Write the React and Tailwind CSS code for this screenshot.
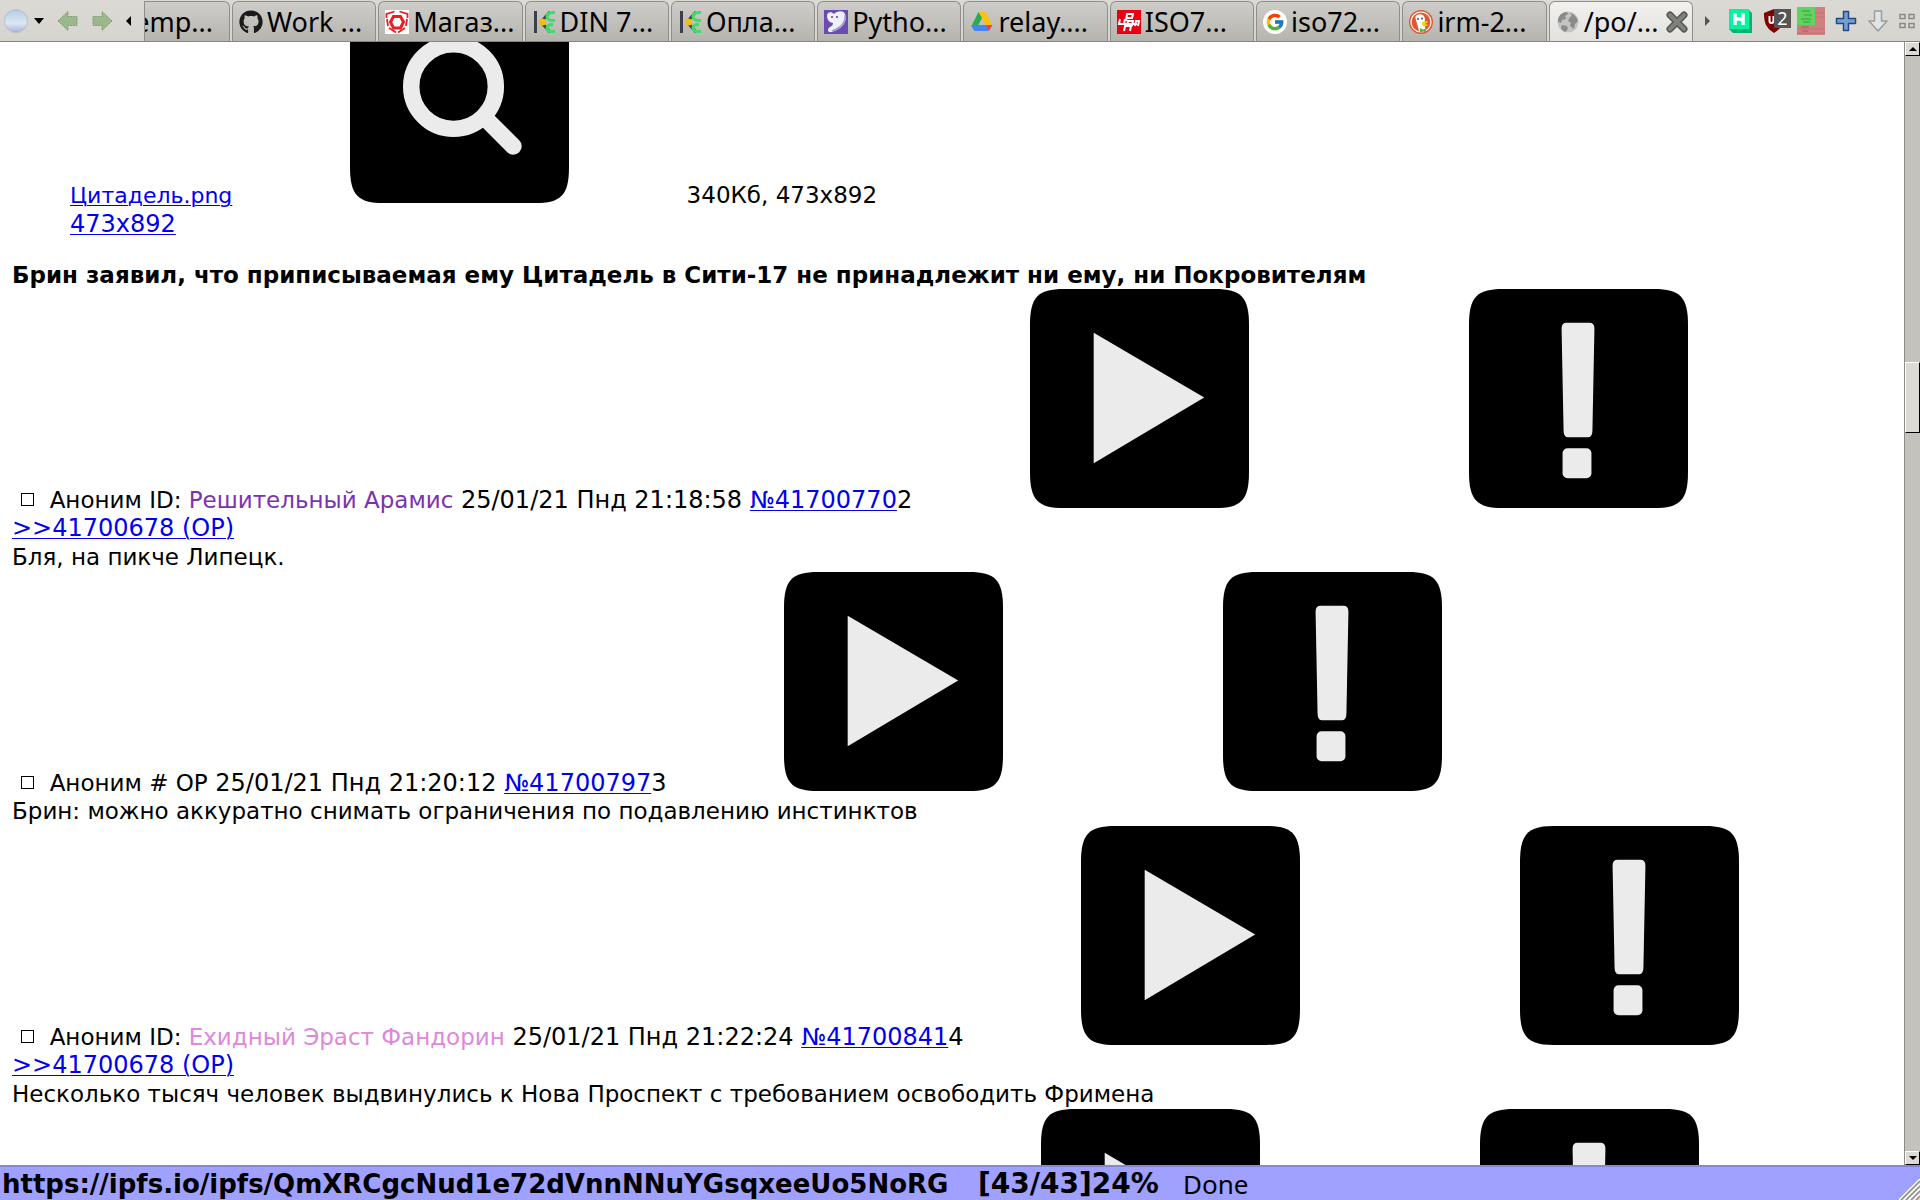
import React from 'react';
import { FaGithub } from 'react-icons/fa';
import { FcGoogle } from 'react-icons/fc';

const ShopIcon = () => (
    <svg viewBox="0 0 24 24" className="w-6 h-6 shrink-0">
        <rect width="24" height="24" fill="#fff" />
        <path d="M8.500 6.500h7l3 5.500-3 6h-7l-3-6z" fill="none" stroke="#ee1c25" strokeWidth="3" />
        <path d="M1.500 8V4l8-2.500M22.500 8V4l-8-2.500M2 9l1 7M22 9l-1 7M4 18l7 4.500M20 18l-7 4.500" fill="none" stroke="#ee1c25" strokeWidth="1.800" />
    </svg>
);

const KrepIcon = () => (
    <svg viewBox="0 0 24 24" className="w-6 h-6 shrink-0" fill="none">
        <path d="M3.500 1v22" stroke="#3c4048" strokeWidth="3" />
        <path d="M18 2L9 12l9 10" stroke="#3c4048" strokeWidth="3" />
        <path d="M23 2.500h-2c-8 0-8 8 0 8h2M23 21.500h-2c-8 0-8-7 0-7" stroke="#3fdc69" strokeWidth="3" />
        <circle cx="10.500" cy="12" r="3.500" fill="#f7bd0c" />
    </svg>
);

const PythonIcon = () => (
    <svg viewBox="0 0 24 24" className="w-6 h-6 shrink-0">
        <rect width="24" height="24" fill="#6a4bb0" />
        <path d="M3 6c0-4 4-5 7-2 3-3 9-4 11 0 3 6-2 15-13 18-5 1-5-3-2-5 2-1 3-2 3-4-3 0-6-3-6-7z" fill="#eef0fa" />
        <path d="M21 5c1 7-4 13-13 16" fill="none" stroke="#9c9cc8" strokeWidth="1.500" />
        <circle cx="8" cy="7" r="1" fill="#5a3ca0" />
        <circle cx="13" cy="7" r="1" fill="#5a3ca0" />
    </svg>
);

const DriveIcon = () => (
    <svg viewBox="0 0 24 24" className="w-6 h-6 shrink-0">
        <path d="M8.500 2h7l6.500 13h-6z" fill="#ffc107" />
        <path d="M8.500 2L12 8l-3 5.500L4.500 21 1.500 16z" fill="#2da94f" />
        <path d="M1.500 16l.5-1h14.500L19 21H5z" fill="#4285f4" />
        <path d="M16 15h6.500L19 21z" fill="#ea4335" />
    </svg>
);

const IsoIcon = () => (
    <svg viewBox="0 0 24 24" className="w-6 h-6 shrink-0" fill="none">
        <rect width="24" height="24" fill="#e60012" />
        <path d="M9 11l1-7h6l-1 4H9M3 9l-1 5h5l1-5M10 16l1-5h5l-1 5M18 16l1-5h3l-1 5M7 21l1-5h6l-1 5M6 14h14" stroke="#fff" strokeWidth="2" />
    </svg>
);

const GoogleIcon = () => (
    <span className="flex items-center justify-center w-6 h-6 shrink-0 rounded-full bg-white">
        <FcGoogle className="w-5 h-5" />
    </span>
);

const DuckIcon = () => (
    <svg viewBox="0 0 24 24" className="w-6 h-6 shrink-0">
        <circle cx="12" cy="12" r="12" fill="#de5833" />
        <circle cx="12" cy="12" r="10" fill="none" stroke="#fff" strokeWidth="1.200" />
        <path d="M8 5c4-2 8 0 8 5l-1 3 2 8c-3 1-5 1-7 0L7 10c-1-2-1-4 1-5z" fill="#fff" />
        <path d="M13 12c3-1 6-1 6 0s-3 1-3 2 3 0 3 1-4 2-6 0z" fill="#fdd20a" />
        <path d="M11 18l3 1.500 3-1v4l-3-1-3 1z" fill="#4cba3c" />
        <circle cx="13" cy="8.500" r="1" fill="#2d4f8e" />
        <circle cx="9" cy="9" r="1" fill="#2d4f8e" />
    </svg>
);

const GlobeIcon = () => (
    <svg viewBox="0 0 24 24" className="w-6 h-6 shrink-0">
        <circle cx="12" cy="12" r="10.500" fill="#c4c4c2" />
        <path d="M2 9c2-5 5-7 9-7l1 2-3 2 1 3-4 1-1 3-3-1zM14 3c4 1 7 4 8 8l-3 3-1 5-4-3 1-3-3-2 2-4 2-1zM6 15l5 1 1 3-3 3c-2-1-4-3-4-5z" fill="#8b8b89" />
    </svg>
);

const tabs = [
    { title: 'Work ...', icon: <FaGithub className="w-6 h-6 shrink-0 text-[#1b1b1b]" /> },
    { title: 'Магаз...', icon: <ShopIcon /> },
    { title: 'DIN 7...', icon: <KrepIcon /> },
    { title: 'Опла...', icon: <KrepIcon /> },
    { title: 'Pytho...', icon: <PythonIcon /> },
    { title: 'relay....', icon: <DriveIcon /> },
    { title: 'ISO7...', icon: <IsoIcon /> },
    { title: 'iso72...', icon: <GoogleIcon /> },
    { title: 'irm-2...', icon: <DuckIcon /> },
];

const tabClass = 'flex items-center h-10 rounded-t-md border border-b-0 border-[#8f8e8a] bg-linear-to-b from-[#cfcdc9] to-[#b6b4af] overflow-hidden whitespace-nowrap';

const TabBar = () => (
    <header className="flex items-end h-[42px] shrink-0 border-b border-[#858480] bg-linear-to-b from-[#dcdad5] to-[#d6d4cf] font-['Noto_Sans',sans-serif] text-[27px] leading-8">
        <div className="flex items-center w-36 h-full shrink-0 pl-1">
            <button aria-label="Browser menu" className="flex items-center gap-1.5">
                <svg viewBox="0 0 24 24" className="w-6 h-6">
                    <defs>
                        <linearGradient id="orb" x1="0" y1="0" x2="0" y2="1">
                            <stop offset="0" stopColor="#b4cbe4" />
                            <stop offset="0.600" stopColor="#dbe8f3" />
                            <stop offset="1" stopColor="#a9aed8" />
                        </linearGradient>
                    </defs>
                    <circle cx="12" cy="12" r="11.500" fill="url(#orb)" stroke="#b9c0cc" />
                </svg>
                <svg viewBox="0 0 10 6" className="w-2.5 h-1.5"><path d="M0 0h10L5 6z" /></svg>
            </button>
            <button aria-label="Back" className="ml-3">
                <svg viewBox="0 0 24 24" className="w-6 h-6"><path d="M2 12L12 2.500v5h9v9h-9v5z" fill="#9db78c" stroke="#7f9a70" strokeDasharray="2 1" /></svg>
            </button>
            <button aria-label="Forward" className="ml-2.5">
                <svg viewBox="0 0 24 24" className="w-6 h-6"><path d="M22 12L12 2.500v5H3v9h9v5z" fill="#9db78c" stroke="#7f9a70" strokeDasharray="2 1" /></svg>
            </button>
            <button aria-label="Scroll tabs left" className="ml-3">
                <svg viewBox="0 0 5 10" className="w-[5px] h-2.5"><path d="M5 0v10L0 5z" /></svg>
            </button>
        </div>
        <nav className="flex flex-1 gap-0.5 min-w-0">
            <button className={`${tabClass} w-[86px] shrink-0 justify-end rounded-tl-none pr-4`}>emp...</button>
            {tabs.map((tab) => (
                <button key={tab.title} className={`${tabClass} flex-1 min-w-0 gap-1 pl-1.5`}>
                    {tab.icon}
                    <span>{tab.title}</span>
                </button>
            ))}
            <button className="flex flex-1 items-center min-w-0 h-10 gap-1 pl-1.5 rounded-t-md border border-b-0 border-[#8f8e8a] bg-linear-to-b from-[#f2f1ef] to-[#e2e1dd] whitespace-nowrap">
                <GlobeIcon />
                <span>/po/...</span>
                <svg viewBox="0 0 22 22" className="w-[22px] h-[22px] ml-auto mr-1 shrink-0">
                    <path d="M4 4l14 14M18 4L4 18" stroke="#555753" strokeWidth="7" strokeLinecap="round" />
                    <path d="M4 4l14 14M18 4L4 18" stroke="#7f817c" strokeWidth="4" strokeLinecap="round" />
                </svg>
            </button>
        </nav>
        <div className="flex items-center w-[227px] h-full shrink-0 pl-3">
            <button aria-label="Scroll tabs right">
                <svg viewBox="0 0 6 10" className="w-1.5 h-2.5"><path d="M0 0v10l5-5z" fill="#555" /></svg>
            </button>
            <button aria-label="H" className="ml-[18px]">
                <svg viewBox="0 0 24 24" className="w-6 h-6">
                    <path d="M0 0h19l4 4v20H4l-4-4z" fill="#00b577" />
                    <rect width="20" height="20" fill="#00f59f" />
                    <path d="M6 4v12M14 4v12M6 10h8" stroke="#fff" strokeWidth="3.500" />
                </svg>
            </button>
            <button aria-label="uBlock" className="relative w-7 h-6 ml-2.5">
                <svg viewBox="0 0 28 24" className="w-7 h-6">
                    <path d="M11 0l10 4c0 10-2 15-10 20C3 19 1 14 1 4z" fill="#800000" />
                    <path d="M6.500 7v5a2 2 0 004 0V7" fill="none" stroke="#fff" strokeWidth="2" />
                </svg>
                <span className="absolute right-0 top-0 w-[17px] h-[19px] bg-[#555] text-white text-[18px] leading-[18px] text-center">2</span>
            </button>
            <button aria-label="Matrix" className="ml-1.5">
                <svg viewBox="0 0 28 28" className="w-7 h-7">
                    <rect width="28" height="28" fill="#cf8080" />
                    <path d="M0 22h28M0 26h28M18 6h10M18 10h10" stroke="#c47373" />
                    <rect width="18" height="18" fill="#5fd35f" />
                    <path d="M5 4h8M7 8h8M4 12h10M6 15h7" stroke="#45b045" strokeWidth="1.500" />
                    <path d="M4 20h8M5 24h6" stroke="#a85a5a" />
                </svg>
            </button>
            <button aria-label="Add" className="ml-2.5">
                <svg viewBox="0 0 22 22" className="w-[22px] h-[22px]"><path d="M8.500 1.500h5v7h7v5h-7v7h-5v-7h-7v-5h7z" fill="#729fcf" stroke="#204a87" strokeWidth="1.500" strokeLinejoin="round" /></svg>
            </button>
            <button aria-label="Downloads" className="ml-2.5">
                <svg viewBox="0 0 22 22" className="w-[22px] h-[22px]"><path d="M7.500 1h7v10H20l-9 10-9-10h5.500z" fill="#e0e4e3" stroke="#999d9b" strokeWidth="1.500" strokeLinejoin="round" /></svg>
            </button>
            <button aria-label="All tabs" className="ml-2.5">
                <svg viewBox="0 0 16 16" className="w-4 h-4" fill="none" stroke="#8a8a88" strokeWidth="1.500"><path d="M1 1.500h5v4H1zM10 1.500h5v4h-5zM1 10.500h5v4H1zM10 10.500h5v4h-5z" /></svg>
            </button>
        </div>
    </header>
);

const IconBox = ({ label, children }) => (
    <button aria-label={label} className="mx-[110px] align-baseline">
        <svg viewBox="0 0 220 220" className="inline w-[219px] h-[219px] align-baseline">
            <path d="M34 0H186C212 0 220 8 220 36V184C220 212 212 220 186 220H34C8 220 0 212 0 184V36C0 8 8 0 34 0z" />
            {children}
        </svg>
    </button>
);

const SearchBox = () => (
    <IconBox label="Поиск">
        <circle cx="104" cy="103" r="42.500" fill="none" stroke="#ebebeb" strokeWidth="16.500" />
        <path d="M135 134l29 29" stroke="#ebebeb" strokeWidth="17" strokeLinecap="round" />
    </IconBox>
);

const PostIcons = () => (
    <>
        <IconBox label="Скрыть">
            <path d="M64 44v131l111-66z" fill="#ebebeb" />
        </IconBox>
        <IconBox label="Пожаловаться">
            <path d="M98 34h23q5 0 5 6l-2 102q0 7-4 7h-21q-4 0-4-7l-2-102q0-6 5-6z" fill="#ebebeb" />
            <rect x="94" y="160" width="29" height="30" rx="5" fill="#ebebeb" />
        </IconBox>
    </>
);

const link = 'text-[#0000ee] underline underline-offset-2 decoration-1';

const posts = [
    { id: 1, name: 'Аноним ID: ', nick: 'Решительный Арамис', color: 'text-[#7a33b0]', date: ' 25/01/21 Пнд 21:18:58 ', num: '№41700770', order: 2, reply: true, text: 'Бля, на пикче Липецк.' },
    { id: 2, name: 'Аноним # OP', date: ' 25/01/21 Пнд 21:20:12 ', num: '№41700797', order: 3, text: 'Брин: можно аккуратно снимать ограничения по подавлению инстинктов' },
    { id: 3, name: 'Аноним ID: ', nick: 'Ехидный Эраст Фандорин', color: 'text-[#dd88dd]', date: ' 25/01/21 Пнд 21:22:24 ', num: '№41700841', order: 4, reply: true, text: 'Несколько тысяч человек выдвинулись к Нова Проспект с требованием освободить Фримена' },
];

const Post = ({ post }) => (
    <article>
        <div className="leading-[27px] whitespace-nowrap">
            <input type="checkbox" id={`post-${post.id}`} className="appearance-none w-[13px] h-[13px] ml-[9px] mr-2 border border-black bg-white align-[2px]" />
            {' '}
            <label htmlFor={`post-${post.id}`} className="text-[23px]">
                {post.name}
                {post.nick && <span className={post.color}>{post.nick}</span>}
            </label>
            {post.date}
            <a href="#post" className={link}>{post.num}</a>
            {post.order}{' '}
            <PostIcons />
        </div>
        {post.reply && <div><a href="#op" className={link}>&gt;&gt;41700678 (OP)</a></div>}
        <p className="text-[23px]">{post.text}</p>
    </article>
);

const ScrollButton = ({ label, d }) => (
    <button aria-label={label} className="flex items-center justify-center h-[14px] shrink-0 bg-[#dcdad5] border border-t-white border-l-white border-r-black border-b-black">
        <svg viewBox="0 0 8 4" className="w-2 h-1"><path d={d} /></svg>
    </button>
);

const App = () => (
    <div className="flex flex-col h-screen overflow-hidden bg-white text-black">
        <TabBar />
        <div className="flex flex-1 min-h-0">
            <main className="flex-1 min-w-0 overflow-hidden pl-3 font-['DejaVu_Sans',sans-serif] text-[24px] leading-[29px]">
                <div className="-mt-[58px] pl-[58px] whitespace-nowrap">
                    <a href="#image" className={`${link} text-[22px]`}>Цитадель.png</a>{' '}
                    <SearchBox />{' '}
                    <span className="text-[23px]">340Кб, 473x892</span>
                    <div><a href="#image" className={link}>473x892</a></div>
                </div>
                <h1 className="mt-[23px] text-[23px] leading-[27px] font-bold">Брин заявил, что приписываемая ему Цитадель в Сити-17 не принадлежит ни ему, ни Покровителям</h1>
                {posts.map((post) => <Post key={post.id} post={post} />)}
                <div className="ml-[919px] whitespace-nowrap"><PostIcons /></div>
            </main>
            <aside className="flex flex-col w-4 shrink-0 border-l border-[#8f8d88] bg-[#c4c2bc]">
                <ScrollButton label="Вверх" d="M0 4h8L4 0z" />
                <div className="flex flex-col flex-1">
                    <div className="grow-[306]" />
                    <div className="h-[71px] bg-[#dcdad5] border border-t-white border-l-white border-r-black border-b-black" />
                    <div className="grow-[719]" />
                </div>
                <ScrollButton label="Вниз" d="M0 0h8L4 4z" />
            </aside>
        </div>
        <footer className="flex items-center h-[35px] shrink-0 border-t-2 border-[#8686d8] bg-[#a0a0ff] pl-0.5 font-['DejaVu_Sans',sans-serif] text-[26px] leading-8 whitespace-nowrap">
            <span className="w-[976px] font-bold">https://ipfs.io/ipfs/QmXRCgcNud1e72dVnnNNuYGsqxeeUo5NoRG</span>
            <span className="w-[205px] text-[28px] font-bold">[43/43]24%</span>
            <span className="font-['Noto_Sans',sans-serif]">Done</span>
            <svg viewBox="0 0 21 21" className="w-[21px] h-[21px] ml-auto self-end">
                <path d="M0 21L21 0v21z" fill="#dcdad5" />
                <path d="M0 21L21 0M5 21L21 5M10 21l11-11M15 21l6-6" stroke="#fff" strokeWidth="1.500" />
                <path d="M2 21L21 2M7 21L21 7M12 21l9-9M17 21l4-4" stroke="#8f8d88" strokeWidth="1.500" />
            </svg>
        </footer>
    </div>
);

export default App;
